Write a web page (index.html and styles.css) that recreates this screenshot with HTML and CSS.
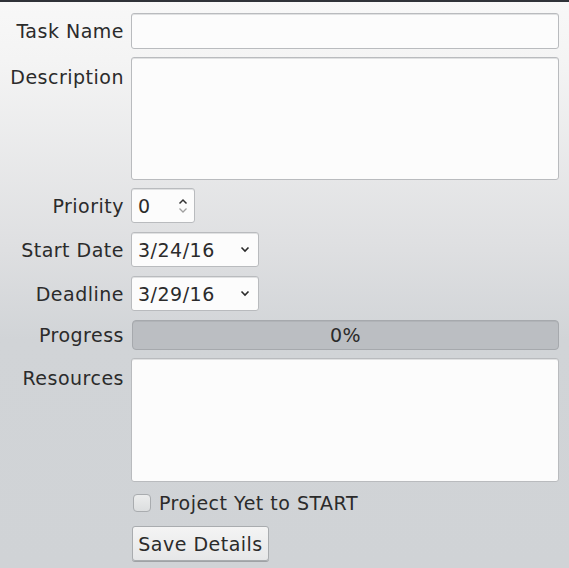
FILE: index.html
```html
<!DOCTYPE html>
<html>
<head>
<meta charset="utf-8">
<link rel="stylesheet" href="styles.css">
</head>
<body>
<div class="topbar"></div>
<form class="form">
  <label class="lbl">Task Name</label>
  <div class="field"><div class="input text-input"></div></div>

  <label class="lbl lbl-top">Description</label>
  <div class="field"><div class="input area desc"></div></div>

  <label class="lbl">Priority</label>
  <div class="field">
    <div class="input spinner">
      <span class="val">0</span>
      <svg class="spin-arrows" width="10" height="18" viewBox="0 0 10 18">
        <path d="M1.5 6.5 L5 3 L8.5 6.5" fill="none" stroke="#333" stroke-width="1.5"/>
        <path d="M1.5 11.5 L5 15 L8.5 11.5" fill="none" stroke="#a0a0a0" stroke-width="1.3"/>
      </svg>
    </div>
  </div>

  <label class="lbl sp">Start Date</label>
  <div class="field sp">
    <div class="input select">
      <span class="val">3/24/16</span>
      <svg class="caret" width="10" height="7" viewBox="0 0 10 7"><path d="M1.5 1.5 L5 5 L8.5 1.5" fill="none" stroke="#2a2a2a" stroke-width="1.6"/></svg>
    </div>
  </div>

  <label class="lbl sp">Deadline</label>
  <div class="field sp">
    <div class="input select">
      <span class="val">3/29/16</span>
      <svg class="caret" width="10" height="7" viewBox="0 0 10 7"><path d="M1.5 1.5 L5 5 L8.5 1.5" fill="none" stroke="#2a2a2a" stroke-width="1.6"/></svg>
    </div>
  </div>

  <label class="lbl sp">Progress</label>
  <div class="field sp"><div class="progress">0%</div></div>

  <label class="lbl lbl-top">Resources</label>
  <div class="field"><div class="input area res"></div></div>

  <div></div>
  <div class="field check-row">
    <span class="checkbox"></span>
    <span class="check-label">Project Yet to START</span>
  </div>

  <div></div>
  <div class="field btn-row"><button type="button" class="btn">Save Details</button></div>
</form>
</body>
</html>
```

FILE: styles.css
```css
html, body {
  margin: 0;
  padding: 0;
}
body {
  width: 569px;
  height: 568px;
  overflow: hidden;
  font-family: "DejaVu Sans", sans-serif;
  font-size: 19px;
  letter-spacing: 0.5px;
  color: #2b2b2b;
  background: linear-gradient(to bottom, #f8f8f8 0px, #f4f4f4 60px, #dedfe1 250px, #d1d4d7 340px, #d0d3d6 568px);
}
.topbar {
  height: 2px;
  background: #2f3238;
}
.form {
  display: grid;
  grid-template-columns: 123px 428px;
  column-gap: 8px;
  row-gap: 8px;
  padding-top: 11px;
  align-items: center;
}
.lbl {
  text-align: right;
  line-height: 24px;
  margin-right: -1px;
}
.lbl.sp {
  margin-top: 1px;
}
.lbl-top {
  align-self: start;
  padding-top: 8px;
}
.field {
  display: flex;
  align-items: center;
}
.field.sp {
  margin-top: 1px;
}
.input {
  box-sizing: border-box;
  background: #fcfcfc;
  border: 1px solid #b9bbbe;
  border-radius: 3px;
  box-shadow: inset 0 1px 0 #e0e1e2;
}
.text-input {
  width: 428px;
  height: 36px;
}
.area {
  width: 428px;
  height: 123px;
}
.res {
  height: 124px;
}
.spinner {
  width: 64px;
  height: 35px;
  display: flex;
  align-items: center;
  justify-content: space-between;
  padding: 0 6px 0 6px;
}
.select {
  width: 128px;
  height: 35px;
  display: flex;
  align-items: center;
  justify-content: space-between;
  padding: 0 8px 0 6px;
}
.val {
  line-height: 24px;
}
.caret, .spin-arrows {
  display: block;
}
.progress {
  box-sizing: border-box;
  margin-left: 1px;
  width: 427px;
  height: 30px;
  background: #bbbec2;
  border: 1px solid #a6a9ad;
  border-radius: 4px;
  box-shadow: inset 0 1px 0 #b0b3b7;
  text-align: center;
  line-height: 28px;
}
.check-row {
  margin-top: 4px;
  padding-left: 2px;
  height: 18px;
}
.checkbox {
  box-sizing: border-box;
  flex: none;
  width: 18px;
  height: 18px;
  border: 1px solid #a9acaf;
  border-radius: 4px;
  background: linear-gradient(to bottom, #eceded, #dcdedf);
  margin-right: 8px;
}
.check-label {
  line-height: 18px;
}
.btn-row {
  margin-top: 6px;
}
.btn {
  margin-left: 1px;
  font-family: "DejaVu Sans", sans-serif;
  font-size: 19px;
  letter-spacing: 0.5px;
  color: #2b2b2b;
  height: 35px;
  width: 137px;
  padding: 0;
  border: 1px solid #a9acaf;
  border-radius: 3px;
  background: linear-gradient(to bottom, #f4f4f4, #e6e7e8);
  box-shadow: 0 1px 0 #9fa2a5;
}
```
